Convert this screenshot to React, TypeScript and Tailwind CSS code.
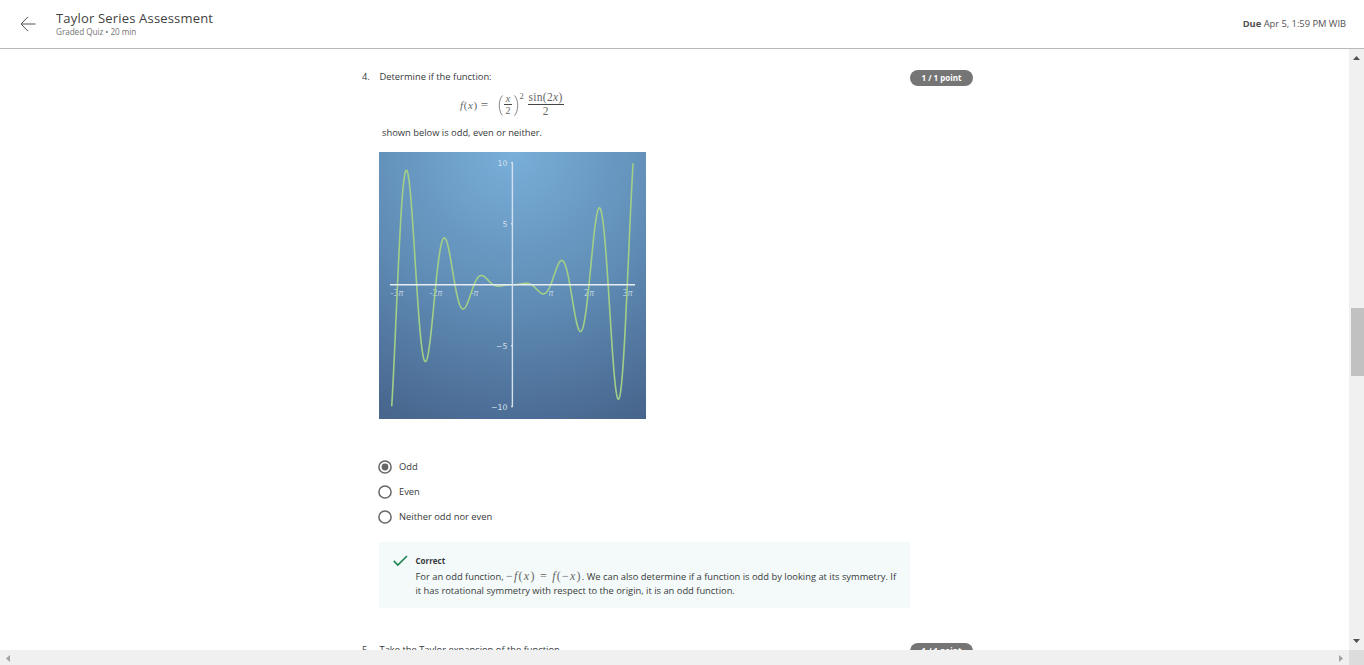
import React from "react";

const ORIGIN = { x: 133.4, y: 132.7 };
const UNIT = 12.19;

function curvePath(): string {
  const points: string[] = [];
  for (let x = -9.92; x <= 9.92; x += 0.02) {
    const y = ((x / 2) ** 2 * Math.sin(2 * x)) / 2;
    if (Math.abs(y) > 10) continue;
    points.push(`${(ORIGIN.x + x * UNIT).toFixed(2)},${(ORIGIN.y - y * UNIT).toFixed(2)}`);
  }
  return "M" + points.join("L");
}

function Chart() {
  return (
    <svg width="267" height="267" viewBox="0 0 267 267" className="block">
      <defs>
        <radialGradient id="sky" gradientUnits="userSpaceOnUse" cx="133" cy="0" r="300">
          <stop offset="0" stopColor="#79afd9" />
          <stop offset="0.5" stopColor="#608db6" />
          <stop offset="1" stopColor="#46638b" />
        </radialGradient>
      </defs>
      <rect width="267" height="267" fill="url(#sky)" />
      <g fill="#d3e0ee" fontFamily="'DejaVu Sans'" fontSize="8">
        <g textAnchor="end" fontSize="7.8">
          <text x="128.5" y="14">10</text>
          <text x="128.5" y="75">5</text>
          <text x="128.5" y="197">−5</text>
          <text x="128.5" y="257.5">−10</text>
        </g>
        <g textAnchor="middle" fillOpacity="0.8">
          <text x="18" y="144">-3<tspan fontStyle="italic">π</tspan></text>
          <text x="57" y="144">-2<tspan fontStyle="italic">π</tspan></text>
          <text x="95.5" y="144">-<tspan fontStyle="italic">π</tspan></text>
          <text x="172" y="144" fontStyle="italic">π</text>
          <text x="210" y="144">2<tspan fontStyle="italic">π</tspan></text>
          <text x="248.5" y="144">3<tspan fontStyle="italic">π</tspan></text>
        </g>
      </g>
      <path d={curvePath()} fill="none" stroke="#a2cf88" strokeWidth="1.6" strokeLinejoin="round" />
      <path d="M11 132.7H256" stroke="#e6edf5" strokeWidth="1.4" />
      <path d="M133.4 10.5V254.5M132 10.8h2M132 71.7h2M132 193.7h2M132 254.5h2" stroke="#d3e1ef" strokeWidth="1.4" />
    </svg>
  );
}

function Formula() {
  return (
    <div className="ml-[80.5px] flex h-[28px] items-center whitespace-nowrap pt-[2px] font-['Liberation_Serif',serif] text-[11px] leading-none text-[#666]">
      <span className="w-[37.5px] text-[11px] tracking-[0.6px]"><i>f</i>(<i>x</i>)<span className="ml-[3px] text-[13px] leading-[0]">=</span></span>
      <svg width="5" height="21" viewBox="0 0 5 21" fill="none" stroke="#666" strokeWidth="0.8"><path d="M4.5 .5C.2 5 .2 16 4.5 20.5" /></svg>
      <span className="flex w-[11px] flex-col items-center text-[10px]">
        <i className="flex h-[10px] items-center">x</i>
        <span className="h-px w-[8px] bg-[#444]" />
        <span className="flex h-[12px] items-center">2</span>
      </span>
      <svg width="5" height="21" viewBox="0 0 5 21" fill="none" stroke="#666" strokeWidth="0.8"><path d="M.5 .5C4.8 5 4.8 16 .5 20.5" /></svg>
      <span className="mb-[18px] ml-[1px] w-[8px] text-[8.5px]">2</span>
      <span className="flex w-[36px] flex-col items-center text-[11.5px]">
        <span className="flex h-[13px] items-center tracking-[0.3px]">sin(2<i>x</i>)</span>
        <span className="h-px w-full bg-[#444]" />
        <span className="flex h-[14px] items-center">2</span>
      </span>
    </div>
  );
}

function Radio({ label, checked = false }: { label: string; checked?: boolean }) {
  return (
    <label className="flex h-[25px] items-start gap-[7px] pt-[5px]">
      <svg width="14" height="14" viewBox="0 0 14 14">
        <circle cx="7" cy="7" r="6.1" fill="#fff" stroke="#666" strokeWidth="1.5" />
        {checked && <circle cx="7" cy="7" r="3.4" fill="#666" />}
      </svg>
      <span className="leading-[13px]">{label}</span>
    </label>
  );
}

function Points() {
  return (
    <span className="flex h-[16px] w-[63px] shrink-0 items-center justify-center rounded-full bg-[#757575] text-[8px] font-bold text-white">
      1 / 1 point
    </span>
  );
}

export default function App() {
  return (
    <div className="flex h-[665px] w-[1364px] flex-col overflow-hidden bg-white font-['Open_Sans',sans-serif] text-[9.35px] text-[#373a3c]">
      <header className="flex h-[49px] shrink-0 items-start border-b border-[#b9b9b9] pr-[18px] pl-[20px]">
        <svg width="16" height="16" viewBox="0 0 16 16" fill="none" stroke="#525252" strokeWidth="1" className="mt-[16px]">
          <path d="M8 .8L1 8l7 7.2M1 8h14.5" />
        </svg>
        <div className="ml-[20px] flex-1">
          <h1 className="mt-[10px] h-[16px] text-[13px] leading-[17px] tracking-[0.18px] text-[#424242]">Taylor Series Assessment</h1>
          <p className="h-[11px] text-[8.2px] leading-[12px] tracking-[-0.06px] text-[#757575]">Graded Quiz • 20 min</p>
        </div>
        <p className="mt-[17px] leading-[14px] tracking-[-0.02px] text-[#525252]"><b>Due</b> Apr 5, 1:59 PM WIB</p>
      </header>
      <div className="flex min-h-0 flex-1">
        <main className="flex-1 overflow-hidden pl-[362px]">
          <section className="flex h-[594px] pt-[21px]">
            <span className="w-[17.5px] leading-[14px]">4.</span>
            <div className="w-[530.5px]">
              <p className="h-[20px] leading-[14px]">Determine if the function:</p>
              <Formula />
              <p className="mt-[8px] ml-[2.5px] h-[26px] leading-[14px]">shown below is odd, even or neither.</p>
              <div className="-ml-[0.5px]"><Chart /></div>
              <div className="-ml-[1.5px] mt-[36px]">
                <Radio label="Odd" checked />
                <Radio label="Even" />
                <Radio label="Neither odd nor even" />
              </div>
              <div className="-ml-[0.5px] mt-[12px] flex h-[66px] bg-[#f4faf9] pt-[12px] pl-[14px]">
                <svg width="15" height="14" viewBox="0 0 15 14" fill="none" stroke="#1f8354" strokeWidth="1.6"><path d="M.8 6.9l4 4.1L14 2" /></svg>
                <div className="ml-[7.5px] whitespace-nowrap leading-[14px]">
                  <p className="h-[16px] text-[8px] font-bold">Correct</p>
                  <p className="h-[14px]">For an odd function, <span className="font-['Liberation_Serif',serif] text-[12px] leading-none tracking-[1.24px] text-[#666]">−<i>f</i>(<i>x</i>) = <i>f</i>(−<i>x</i>)</span>. We can also determine if a function is odd by looking at its symmetry. If</p>
                  <p>it has rotational symmetry with respect to the origin, it is an odd function.</p>
                </div>
              </div>
            </div>
            <Points />
          </section>
          <section className="flex">
            <span className="w-[17.5px] leading-[14px]">5.</span>
            <p className="w-[530.5px] leading-[14px]">Take the Taylor expansion of the function</p>
            <Points />
          </section>
        </main>
        <div className="flex w-[15px] flex-col items-center bg-[#f0f0f0] pt-[7px] pb-[7px]">
          <svg width="7" height="4" viewBox="0 0 7 4" fill="#505050"><path d="M0 4L3.5 0 7 4z" /></svg>
          <span className="mt-[248px] mb-auto h-[68px] w-[13px] self-end bg-[#c1c1c1]" />
          <svg width="7" height="4" viewBox="0 0 7 4" fill="#505050"><path d="M0 0h7L3.5 4z" /></svg>
        </div>
      </div>
      <div className="flex h-[15px] shrink-0 bg-[#f0f0f0]">
        <div className="flex flex-1 items-center justify-between pt-[2px] pr-[6px] pl-[6px]">
          <svg width="4" height="7" viewBox="0 0 4 7" fill="#a3a3a3"><path d="M4 0v7L0 3.5z" /></svg>
          <svg width="4" height="7" viewBox="0 0 4 7" fill="#a3a3a3"><path d="M0 0v7l4-3.5z" /></svg>
        </div>
        <span className="w-[15px] bg-[#dcdcdc]" />
      </div>
    </div>
  );
}
